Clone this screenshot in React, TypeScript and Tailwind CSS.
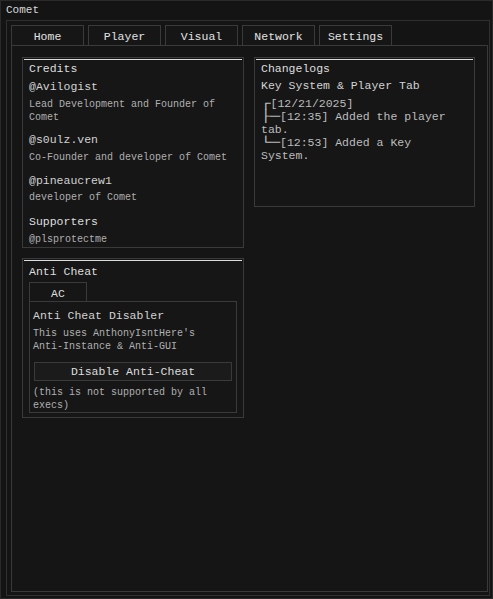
import React from "react";

const mono = "font-['Liberation_Mono','DejaVu_Sans_Mono',monospace]";

function Panel({
  title,
  className,
  titleClass,
  children,
}: {
  title: string;
  className?: string;
  titleClass?: string;
  children?: React.ReactNode;
}) {
  return (
    <div className={`border border-[#3a3a3a] bg-[#161616] p-px flex flex-col ${className ?? ""}`}>
      <div className="h-px bg-[#dcdcdc]" />
      <div className="px-[5px] flex flex-col">
        <div className={`text-[11.5px] leading-[14px] text-[#dedede] ${titleClass ?? "mt-[2px]"}`}>{title}</div>
        {children}
      </div>
    </div>
  );
}

function Name({ children, className }: { children: React.ReactNode; className?: string }) {
  return <div className={`text-[11.5px] leading-[14px] text-[#d2d2d2] ${className ?? ""}`}>{children}</div>;
}

function Desc({ children, className }: { children: React.ReactNode; className?: string }) {
  return <div className={`text-[10px] leading-[13px] text-[#b0b0b0] ${className ?? ""}`}>{children}</div>;
}

// box-drawing glyphs are drawn wider than the text cells, like the original
function Branch({ glyph, w }: { glyph: string; w: string }) {
  return (
    <span className={`inline-block ${w} overflow-visible align-top`}>
      <span className="inline-block origin-left scale-x-[1.38] font-['DejaVu_Sans_Mono',monospace] text-[#bdbdbd]">
        {glyph}
      </span>
    </span>
  );
}

function TreeLine({ children }: { children?: React.ReactNode }) {
  return <div className="h-[13px] leading-[13px] whitespace-pre">{children}</div>;
}

export default function App() {
  const tabs = ["Home", "Player", "Visual", "Network", "Settings"];

  return (
    <div className={`w-[493px] h-[599px] bg-[#141414] border border-[#2a2a2a] flex flex-col ${mono}`}>
      <div className="h-[19px] px-[5px] text-[11px] leading-[19px] text-[#d8d8d8]">Comet</div>

      <div className="flex-1 ml-[5px] mr-[2px] mb-[2px] border border-[#303030] flex flex-col pt-[4px] pl-[4px] pr-[1px] pb-[3px]">
        <div className="flex gap-[4px] h-[20px]">
          {tabs.map((t) => (
            <div
              key={t}
              className="w-[73px] border border-b-0 border-[#3a3a3a] bg-[#161616] text-[11.5px] leading-[22px] text-center text-[#e2e2e2]"
            >
              {t}
            </div>
          ))}
        </div>

        <div className="flex-1 border border-[#3a3a3a] bg-[#151515] pt-[11px] pl-[10px] flex gap-[10px] items-start">
          <div className="w-[222px] flex flex-col gap-[10px]">
            <Panel title="Credits" className="pb-px">
              <Name className="mt-[4px]">@Avilogist</Name>
              <Desc className="mt-[4px]">Lead Development and Founder of Comet</Desc>
              <Name className="mt-[9px]">@s0ulz.ven</Name>
              <Desc className="mt-[4px]">Co-Founder and developer of Comet</Desc>
              <Name className="mt-[10px]">@pineaucrew1</Name>
              <Desc className="mt-[3px]">developer of Comet</Desc>
              <Name className="mt-[11px] text-[#dedede]">Supporters</Name>
              <Desc className="mt-[4px] text-[#a4a4a4]">@plsprotectme</Desc>
            </Panel>

            <Panel title="Anti Cheat" titleClass="mt-[4px]" className="h-[160px]">
              <div className="mt-[3px] w-[58px] h-[19px] border border-b-0 border-[#3a3a3a] text-[11.5px] leading-[21px] text-center text-[#dedede]">
                AC
              </div>
              <div className="border border-[#3a3a3a] pt-[7px] px-[3px] flex flex-col">
                <Name>Anti Cheat Disabler</Name>
                <Desc className="mt-[4px]">
                  This uses AnthonyIsntHere's
                  <br />
                  Anti-Instance &amp; Anti-GUI
                </Desc>
                <button className="mt-[9px] mx-px h-[19px] border border-[#3a3a3a] bg-[#1b1b1b] text-[11.5px] leading-[17px] text-[#dedede]">
                  Disable Anti-Cheat
                </button>
                <Desc className="mt-[5px]">(this is not supported by all execs)</Desc>
              </div>
            </Panel>
          </div>

          <Panel title="Changelogs" className="w-[221px] h-[150px]">
            <Name className="mt-[3px]">Key System &amp; Player Tab</Name>
            <div className="mt-[4px] text-[11.5px] text-[#bdbdbd]">
              <TreeLine>
                <Branch glyph="┌" w="w-[9.5px]" />
                [12/21/2025]
              </TreeLine>
              <TreeLine>
                <Branch glyph="├─" w="w-[19px]" />
                [12:35] Added the player
              </TreeLine>
              <TreeLine>tab.</TreeLine>
              <TreeLine>
                <Branch glyph="└─" w="w-[19px]" />
                [12:53] Added a Key
              </TreeLine>
              <TreeLine>System.</TreeLine>
            </div>
          </Panel>
        </div>
      </div>
    </div>
  );
}
